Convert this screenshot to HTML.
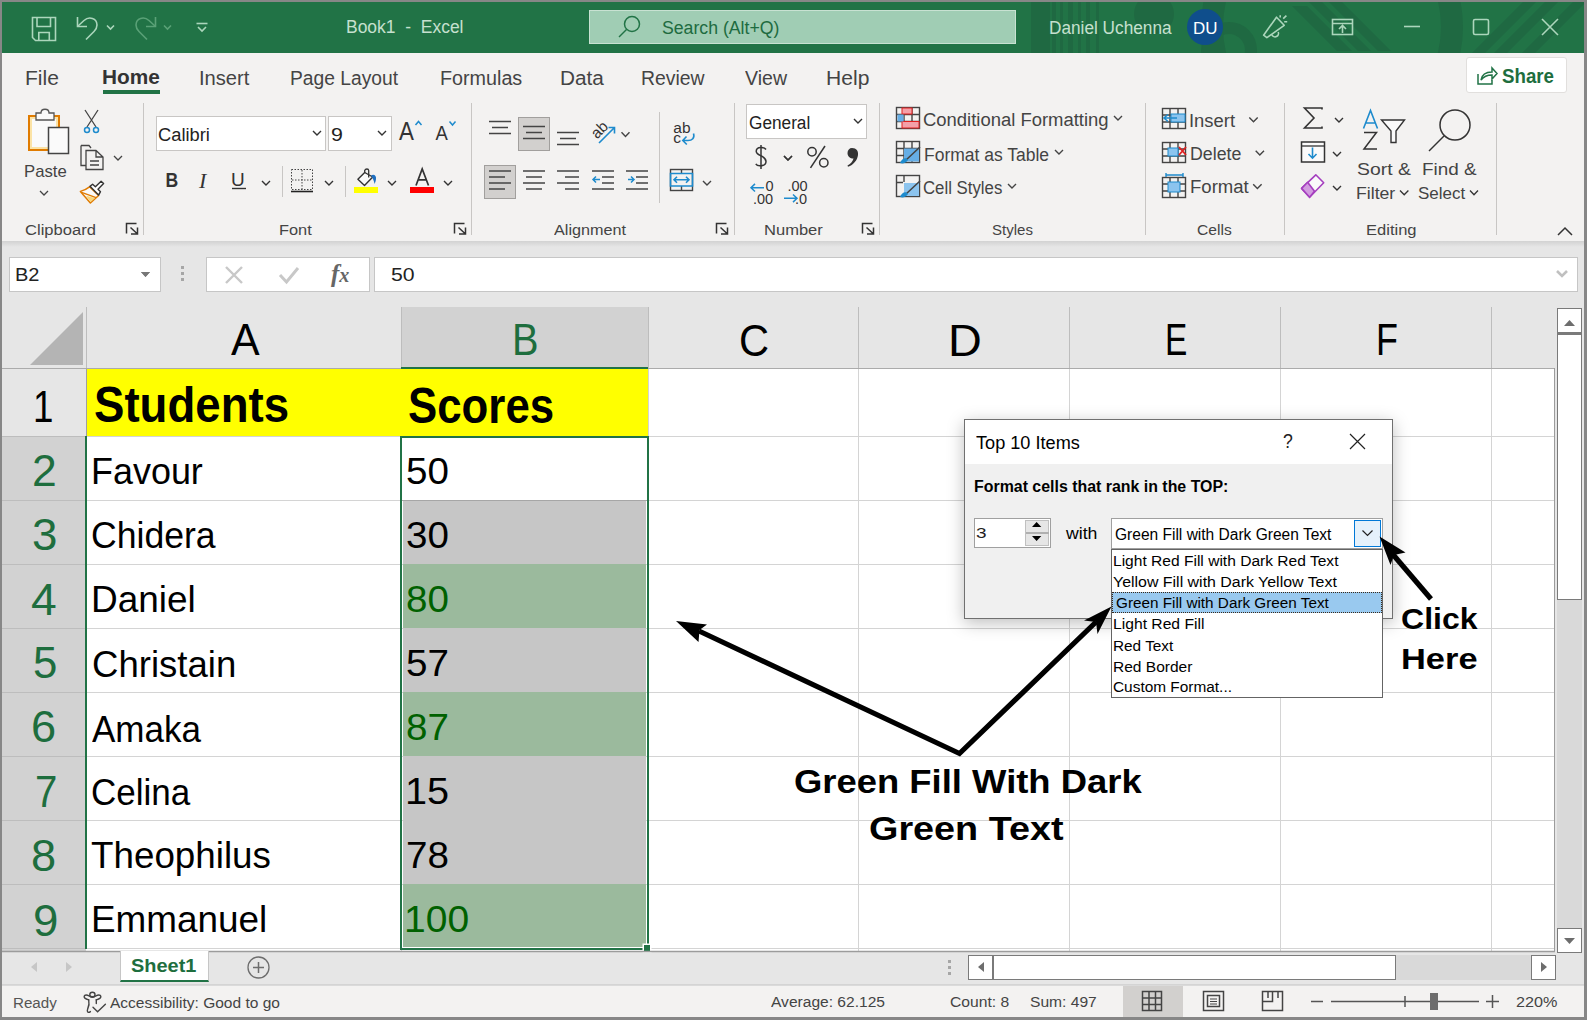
<!DOCTYPE html>
<html><head><meta charset="utf-8">
<style>
*{margin:0;padding:0;box-sizing:border-box}
html,body{width:1587px;height:1020px;overflow:hidden;background:#878787}
body{position:relative;font-family:"Liberation Sans",sans-serif;color:#262626}
.a{position:absolute}
svg{position:absolute;overflow:visible}
.t{position:absolute;white-space:nowrap;line-height:1}
#title{left:2px;top:2px;width:1582px;height:51px;background:#217346;overflow:hidden}
#tabs{left:2px;top:53px;width:1582px;height:47px;background:#f3f2f1}
#ribbon{left:2px;top:100px;width:1582px;height:141px;background:#f3f2f1}
#fbar{left:2px;top:241px;width:1582px;height:67px;background:#e6e6e6}
#grid{left:2px;top:307px;width:1553px;height:645px;background:#fff}
#tabbar{left:2px;top:952px;width:1582px;height:33px;background:#e6e6e6}
#status{left:2px;top:985px;width:1582px;height:32px;background:#f3f2f1;border-top:1px solid #dadada}
</style></head><body>
<div id="title" class="a"></div>
<div id="tabs" class="a"></div>
<div id="ribbon" class="a"></div>
<div id="fbar" class="a"></div>
<div id="grid" class="a"></div>
<div id="tabbar" class="a"></div>
<div id="status" class="a"></div>
<!-- TITLE BAR -->
<div class="a" style="left:2px;top:2px;width:1582px;height:51px;overflow:hidden">
<svg style="left:-2px;top:-2px" width="1587" height="60">
 <g fill="#1f6942">
  <rect x="1031" y="0" width="19" height="60"/>
  <rect x="1052" y="0" width="4" height="60"/><rect x="1060" y="0" width="3" height="60"/><rect x="1068" y="0" width="5" height="60"/><rect x="1078" y="0" width="3" height="60"/><rect x="1086" y="0" width="4" height="60"/><rect x="1096" y="0" width="3" height="60"/>
  <circle cx="1154" cy="14" r="20"/>
  <circle cx="1229" cy="50" r="22" fill="none" stroke="#1f6942" stroke-width="12"/>
  <path d="M1292 6 L1307 6 L1352 51 L1337 51Z"/><path d="M1307 0 L1320 0 L1371 51 L1358 51Z"/><path d="M1327 0 L1340 0 L1391 51 L1378 51Z"/>
  <circle cx="1332" cy="27" r="120" fill="none" stroke="#1f6942" stroke-width="22"/>
  <path d="M1472 53 L1485 53 L1536 2 L1523 2Z"/><path d="M1494 53 L1507 53 L1558 2 L1545 2Z"/><path d="M1522 53 L1535 53 L1586 2 L1573 2Z"/>
 </g>
 <g fill="none" stroke="#acd6bc" stroke-width="1.6">
  <path d="M32.5 17.5 H55.5 V40.5 H35.5 L32.5 37.5 Z"/>
  <path d="M37 17.5 V26.5 H50.5 V17.5"/>
  <path d="M38.8 40.5 V32.5 H49.3 V40.5"/>
  <path d="M77.5 17 V26.5 H87"/>
  <path d="M78 26 L84 20.5 C89 16 97 18 97 25 C97 28 96 29.5 94 31.5 L86 39.5"/>
  <path d="M107 25.5 L110.5 29 L114 25.5"/>
  <path d="M196.5 23.5 H207.5" />
  <path d="M198 27 L202 31 L206 27"/>
 </g>
 <g fill="none" stroke="#5aa177" stroke-width="1.6">
  <path d="M155.5 17 V26.5 H146"/>
  <path d="M155 26 L149 20.5 C144 16 136 18 136 25 C136 28 137 29.5 139 31.5 L147 39.5"/>
  <path d="M164 25.5 L167.5 29 L171 25.5"/>
 </g>
 <rect x="589.5" y="10.5" width="426" height="33" fill="#a0cdb4" stroke="#c8e2d2"/>
 <g fill="none" stroke="#217346" stroke-width="1.5"><circle cx="632" cy="24" r="7.5"/><path d="M626.5 29.5 L619 37"/></g>
 <circle cx="1205" cy="27" r="18" fill="#0f4e8c"/>
 <g fill="none" stroke="#acd6bc" stroke-width="1.6">
  <path d="M1276.5 17.2 L1284.2 25.3 L1266.9 37.6 L1263.6 35.2 Z" stroke-linejoin="round"/>
  <path d="M1271.9 34.8 A3 3 0 0 0 1278.2 32"/>
  <path d="M1280.2 15.2 V17.6 M1283.2 18.6 L1286.4 15.6 M1284.2 21.8 H1287.2" stroke-width="1.6"/>
  <rect x="1332.5" y="19.5" width="20" height="15"/>
  <path d="M1332.5 23.5 H1352.5 M1342.5 33 V26 M1339 29 L1342.5 25.5 L1346 29"/>
  <path d="M1404 26.5 H1420"/>
  <rect x="1473.5" y="19.5" width="15" height="15" rx="1.5"/>
  <path d="M1542 19 L1558 35 M1558 19 L1542 35"/>
 </g>
</svg></div>
<!-- TABS -->

<div class="a" style="left:103px;top:90px;width:57px;height:4px;background:#217346"></div>
<div class="a" style="left:1466px;top:57px;width:101px;height:36px;background:#fff;border:1px solid #e1dfdd;border-radius:3px"></div>
<svg style="left:1476px;top:65px" width="22" height="22"><g fill="none" stroke="#217346" stroke-width="1.5"><path d="M2 9 V19 H16 V15"/><path d="M5 15 C6 9 10 7 16 7 V3 L21 8.5 L16 14 V10 C11 10 8 11 5 15Z"/></g></svg>
<!-- RIBBON -->
<svg style="left:0;top:0" width="1587" height="245">
<g stroke="#c8c6c4" stroke-width="1">
 <path d="M143.5 103 V235 M471.5 103 V235 M734.5 103 V235 M879.5 103 V235 M1145.5 103 V235 M1284.5 103 V235 M1496.5 103 V235"/>
 <path d="M282.5 166 V197 M345.5 166 V197 M659.5 112 V203"/>
</g>
<!-- Paste -->
<path d="M29 116 H59 V150 H29 Z" fill="#fbe3a6" stroke="#e07b00" stroke-width="2"/>
<path d="M32 119 H56 V147 H32 Z" fill="#fafafa"/>
<path d="M36 120 V113 H41 C41 108 49 108 49 113 H54 V120 Z" fill="#fafafa" stroke="#555" stroke-width="1.3"/>
<rect x="48.5" y="127.5" width="20" height="26" fill="#fafafa" stroke="#444" stroke-width="1.5"/>
<g fill="none" stroke="#444" stroke-width="1.3">
 <path d="M40 191 L44 195 L48 191"/>
 <path d="M114 156 L118 160 L122 156"/>
 <path d="M85 110 L96 127 M98 110 L87 127"/>
 <path d="M81 145.5 H89 L91 148 M81 145.5 V165.5 H86"/>
 <path d="M86 150.5 H96 L103 157 V169.5 H86 Z M96 150.5 V157 H103 M90 161 H99 M90 165 H99"/>
 
</g>
<g fill="none" stroke="#1e8bcd" stroke-width="1.5"><circle cx="87" cy="130" r="2.5"/><circle cx="96" cy="130" r="2.5"/></g>
<path d="M89.5 186.8 C86 189.5 83 190.7 80.4 191.4 L90.4 203 L98.6 195.5 Z" fill="#fafafa" stroke="#e07b00" stroke-width="1.5" stroke-linejoin="round"/>
<path d="M86 195.8 L95 198 L90.5 202 Z" fill="#f7d67a"/>
<path d="M81.6 192.3 L96.1 197.6" stroke="#e07b00" stroke-width="1.3"/>
<path d="M89.96 186.35 L92.6 184.3 L95.4 186.8 L101.1 181.3 L103.6 183.5 L98 189.2 L100.5 191.7 L98.6 195.1 Z" fill="#fff" stroke="#333" stroke-width="1.4" stroke-linejoin="round"/>
<!-- launchers -->
<g fill="none" stroke="#333" stroke-width="1.5">
 <path d="M126.5 233.5 V223.5 H136.5 M130.5 227.5 L137.0 233.5 M137.5 227.5 V234 H131.0 M454.5 233.5 V223.5 H464.5 M458.5 227.5 L465.0 233.5 M465.5 227.5 V234 H459.0 M716.5 233.5 V223.5 H726.5 M720.5 227.5 L727.0 233.5 M727.5 227.5 V234 H721.0 M862.5 233.5 V223.5 H872.5 M866.5 227.5 L873.0 233.5 M873.5 227.5 V234 H867.0"/>
</g>
<!-- Font group -->
<rect x="156.5" y="116.5" width="169" height="34" fill="#fff" stroke="#c8c6c4"/>
<rect x="328.5" y="116.5" width="63" height="34" fill="#fff" stroke="#c8c6c4"/>
<g fill="none" stroke="#333" stroke-width="1.4">
 <path d="M313 131 L317 135 L321 131 M378 131 L382 135 L386 131"/>
 <path d="M262 181 L266 185 L270 181 M325 181 L329 185 L333 181 M388 181 L392 185 L396 181 M444 181 L448 185 L452 181"/>
 
 
 <path d="M232 188.5 H246"/>
</g>
<path d="M415.5 125 L418.5 121.5 L421.5 125" fill="none" stroke="#1e8bcd" stroke-width="1.5"/>
<path d="M449.5 121.5 L452.5 125 L455.5 121.5" fill="none" stroke="#1e8bcd" stroke-width="1.5"/>
<text x="165.5" y="187" font-family="Liberation Sans" font-weight="bold" font-size="20" fill="#333" transform="translate(165.5 0) scale(0.88 1) translate(-165.5 0)">B</text>
<text x="399" y="139.6" font-family="Liberation Sans" font-size="26" fill="#333" transform="translate(399 0) scale(0.86 1) translate(-399 0)">A</text>
<text x="435.5" y="139.6" font-family="Liberation Sans" font-size="20.5" fill="#333" transform="translate(435.5 0) scale(0.9 1) translate(-435.5 0)">A</text>
<text x="199" y="188" font-family="Liberation Serif" font-style="italic" font-size="22" fill="#333">I</text>
<text x="231" y="186" font-family="Liberation Sans" font-size="19" fill="#333">U</text>
<g fill="none" stroke="#444" stroke-width="1" stroke-dasharray="1.5 1.5">
 <rect x="291.5" y="169.5" width="21" height="20"/><path d="M302 170 V190 M292 180 H312"/>
</g>
<path d="M291 191.5 H313" stroke="#222" stroke-width="1.6"/>
<!-- fill -->
<path d="M357.9 179.3 L364.7 172.5 L372.7 177 L364.5 185.5 Z" fill="#fafafa" stroke="#333" stroke-width="1.4" stroke-linejoin="round"/>
<path d="M364.7 173 V170.5 C365.5 168.5 368.5 168.5 368.7 170.5 V177.6" fill="none" stroke="#333" stroke-width="1.3"/>
<path d="M371 175.5 C374 173.5 376.5 176 376 179 C375.8 181 375 183 374.6 184 C374 181 373 178.5 371 175.5 Z" fill="#1e6fc0"/>
<rect x="354" y="187" width="24" height="6" fill="#ffff00"/>
<path d="M416 185.5 L422.2 169 L428.5 185.5 M418.4 179.9 H426.3" fill="none" stroke="#333" stroke-width="1.7"/>
<rect x="410" y="187" width="24" height="6" fill="#ff0000"/>
<!-- Alignment group -->
<rect x="518.5" y="117.5" width="31" height="33" fill="#d2d0ce" stroke="#a19f9d"/>
<rect x="484.5" y="165.5" width="31" height="33" fill="#d2d0ce" stroke="#a19f9d"/>
<g fill="none" stroke="#444" stroke-width="1.4">
 <path d="M489 121.5 H511 M492 127.5 H508 M489 133.5 H511"/>
 <path d="M523 126.5 H545 M526 132.5 H542 M523 138.5 H545"/>
 <path d="M557 132.5 H579 M560 138.5 H576 M557 144.5 H579"/>
 <path d="M489 171 H511 M489 177 H505 M489 183 H511 M489 189 H505"/>
 <path d="M523 171 H545 M526 177 H542 M523 183 H545 M526 189 H542"/>
 <path d="M557 171 H579 M565 177 H579 M557 183 H579 M565 189 H579"/>
 <path d="M592 171 H614 M602 177 H614 M602 183 H614 M592 189 H614"/>
 <path d="M626 171 H648 M636 177 H648 M636 183 H648 M626 189 H648"/>
 <path d="M621.5 132.3 L625.5 136.5 L629.5 132.3 M703 181 L707 185 L711 181"/>
 <rect x="670.5" y="169.5" width="22" height="21"/><path d="M681.5 169.5 V173.5 M681.5 186 V190.5"/>
</g>
<g fill="none" stroke="#1e8bcd" stroke-width="1.5">
 <path d="M593 179.5 H600 M596 176.5 L593 179.5 L596 182.5"/>
 <path d="M628 179.5 H634 M631 176.5 L634 179.5 L631 182.5"/>
 <path d="M599 143 L614.5 127.5 M608.5 127.5 H614.5 V133.5" stroke-width="1.6"/>
 <path d="M670.5 173.5 H692.5 V186 H670.5 Z" stroke-width="1.6"/>
 <path d="M674 179.8 H689 M677 176.8 L674 179.8 L677 182.8 M686 176.8 L689 179.8 L686 182.8" stroke-width="1.6"/>
 <path d="M693.5 133.5 C695 138 692 140.5 688 140.5 H683 M686.5 136.5 L682.8 140.5 L686.8 144.5" stroke-width="1.6"/>
</g>
<text x="590" y="135" transform="rotate(-45 599 129)" font-family="Liberation Sans" font-size="15.5" fill="#333">ab</text>
<text x="673.3" y="132.8" font-family="Liberation Sans" font-size="15.5" fill="#333">ab</text>
<text x="673.3" y="143.4" font-family="Liberation Sans" font-size="15.5" fill="#333">c</text>
<!-- Number group -->
<rect x="746.5" y="104.5" width="120" height="34" fill="#fff" stroke="#c8c6c4"/>
<path d="M854 119 L858 123 L862 119 M784 156 L788 160 L792 156" fill="none" stroke="#333" stroke-width="1.4"/>
<g fill="none" stroke="#333" stroke-width="1.5">
 <path d="M761 145 V169"/>
 <path d="M766 149.5 C764.5 147 756.5 146 756.2 151.2 C756 156.2 766 155.2 766 161.5 C766 166.5 757.5 167 755.8 163.8"/>
 <circle cx="812" cy="151.8" r="4.2"/><circle cx="823.8" cy="162.8" r="4.2"/>
 <path d="M810.5 167.8 L825 146"/>
 <path d="M784 156 L788 160 L792 156" stroke-width="1.4"/>
</g>
<path d="M852 148 C856.5 148 858.5 151 858 155 C857.5 160 853.5 165 848 166.8 L847.5 165.5 C851 163.5 853 161 853.5 158.5 C850 158.5 847.5 156.5 847.5 153 C847.5 150 849.5 148 852 148 Z" fill="#333"/>
<g font-family="Liberation Sans" font-size="14.5" fill="#333">
 <text x="765.5" y="191.2">0</text>
 <text x="753" y="203.6">.00</text>
 <text x="787.5" y="191.2">.00</text>
 <text x="795" y="203.6">.0</text>
</g>
<path d="M751 187.7 H764 M755 183.9 L751 187.7 L755 191.5 M784 198.3 H797 M793 194.5 L797 198.3 L793 202.1" fill="none" stroke="#1e8bcd" stroke-width="1.5"/>
<!-- Styles icons -->
<g fill="none" stroke="#444" stroke-width="1.4">
 <rect x="896.5" y="107.5" width="23" height="21"/>
 <path d="M896.5 114.5 H919.5 M896.5 121.5 H919.5 M904 107.5 V128.5 M912 107.5 V128.5"/>
 <rect x="896.5" y="141.5" width="23" height="21"/>
 <path d="M896.5 148.5 H919.5 M896.5 155.5 H919.5 M904 141.5 V162.5 M912 141.5 V162.5"/>
 <rect x="896.5" y="175.5" width="23" height="21"/>
 <path d="M896.5 182.5 H903 M904 175.5 V182 "/>
</g>
<rect x="902" y="108" width="10" height="6" fill="#f3a0a8" stroke="#e02020" stroke-width="1"/>
<rect x="902" y="121.5" width="17" height="6.5" fill="#f3a0a8" stroke="#e02020" stroke-width="1"/>
<rect x="897.5" y="114.5" width="6" height="7" fill="#66aee6"/>
<rect x="904" y="148.5" width="15" height="13" fill="#66aee6"/>
<rect x="904" y="183" width="15" height="13" fill="#8cc4ee"/>
<g fill="none" stroke="#444" stroke-width="1.6">
 <path d="M920 147 L906 160 M920 181 L906 194"/>
</g>
<path d="M900 163 C902 158 906 157 908 160 C906 163 903 164 900 163Z M900 197 C902 192 906 191 908 194 C906 197 903 198 900 197Z" fill="#1e8bcd"/>
<g fill="none" stroke="#444" stroke-width="1.4">
 <path d="M1114 116 L1118 120 L1122 116 M1055 150 L1059 154 L1063 150 M1008 184 L1012 188 L1016 184"/>
</g>
<!-- Cells icons -->
<g fill="none" stroke="#444" stroke-width="1.4">
 <rect x="1162.5" y="108.5" width="23" height="20"/><path d="M1162.5 115 H1185.5 M1162.5 122 H1185.5 M1170 108.5 V128.5 M1178 108.5 V128.5"/>
 <rect x="1162.5" y="142.5" width="23" height="20"/><path d="M1162.5 149 H1185.5 M1162.5 156 H1185.5 M1170 142.5 V162.5 M1178 142.5 V162.5"/>
 <rect x="1162.5" y="177.5" width="23" height="20"/><path d="M1162.5 184 H1185.5 M1162.5 191 H1185.5 M1170 177.5 V197.5 M1178 177.5 V197.5"/>
 <path d="M1249.3 117.5 L1253.5 121.8 L1257.7 117.5 M1255.7 150.7 L1259.8 155 L1264 150.7 M1253.2 184.2 L1257.4 188.5 L1261.6 184.2"/>
</g>
<rect x="1171" y="114" width="14" height="8" fill="#8cc4ee" stroke="#1e8bcd"/>
<path d="M1177 118 H1164 M1168 114.5 L1164 118 L1168 121.5" fill="none" stroke="#1e8bcd" stroke-width="1.6"/>
<rect x="1168" y="148" width="10" height="8" fill="#8cc4ee" stroke="#1e8bcd"/>
<path d="M1179 147 L1186 155 M1186 147 L1179 155" stroke="#e02020" stroke-width="1.8"/>
<rect x="1168" y="182" width="12" height="10" fill="#8cc4ee" stroke="#1e8bcd"/>
<path d="M1166 175 H1183 M1166 173 V177 M1183 173 V177" stroke="#1e8bcd" stroke-width="1.4" fill="none"/>
<!-- Editing icons -->
<g fill="none" stroke="#333" stroke-width="1.6">
 <path d="M1322 109.5 V108 H1304.5 L1314 118 L1304.5 128 H1322 V126.5"/>
 <rect x="1301.5" y="142" width="23" height="20" stroke-width="1.5" fill="#fafafa"/><path d="M1301.5 146 H1324.5" stroke-width="1.3"/>
 <path d="M1335 118 L1339 122 L1343 118 M1333 152 L1337 156 L1341 152 M1333 186 L1337 190 L1341 186" stroke-width="1.4"/>
 <path d="M1364 132.5 H1376.5 L1364 149 H1377" stroke-width="1.5"/>
 <path d="M1381.5 120 H1404.5 L1396 131 V142.5 H1391 V131 Z" stroke-width="1.4" fill="#fafafa"/>
 <circle cx="1455" cy="125" r="15" stroke-width="1.5"/><path d="M1444 136 L1429 151" stroke-width="1.5"/>
 <path d="M1558 235 L1565 228 L1572 235" stroke-width="1.5"/>
</g>
<path d="M1312.5 147.5 V158 M1308.5 154 L1312.5 158.2 L1316.5 154" fill="none" stroke="#1e8bcd" stroke-width="1.6"/>
<path d="M1363.5 128.5 L1370.5 110.5 L1377.5 128.5 M1366 123 H1375" fill="none" stroke="#1e8bcd" stroke-width="1.6"/>
<path d="M1301.6 188.4 L1315.8 174.8 L1323.7 182.7 L1309.6 197.3 Z" fill="#fafafa" stroke="#a53fbf" stroke-width="1.6" stroke-linejoin="round"/>
<path d="M1301.6 188.4 L1307.6 182.3 L1314.5 191.3 L1309.6 197.3 Z" fill="#d29be0" stroke="#a53fbf" stroke-width="1.6" stroke-linejoin="round"/>
<path d="M1400 190.5 L1404.2 194.8 L1408.4 190.5 M1470 190.5 L1474 194.8 L1478 190.5" fill="none" stroke="#333" stroke-width="1.3"/>
</svg>
<!-- FORMULA BAR -->
<div class="a" style="left:2px;top:241px;width:1582px;height:6px;background:linear-gradient(#d2d2d2,#e6e6e6)"></div>
<div class="a" style="left:9px;top:257px;width:152px;height:35px;background:#fff;border:1px solid #c6c6c6"></div>
<svg style="left:0;top:0" width="1587" height="310">
 <path d="M141 272 H150 L145.5 277 Z" fill="#777"/>
 <g fill="#a6a6a6"><rect x="181" y="266" width="3" height="3"/><rect x="181" y="272" width="3" height="3"/><rect x="181" y="278" width="3" height="3"/></g>
 <path d="M226 267 L242 283 M242 267 L226 283" stroke="#c6c6c6" stroke-width="2"/>
 <path d="M280 275 L286 282 L298 268" fill="none" stroke="#c6c6c6" stroke-width="2.5"/>
 <path d="M1557 271 L1562 276 L1567 271" fill="none" stroke="#c6c6c6" stroke-width="2"/>
 
</svg>
<div class="a" style="left:206px;top:257px;width:164px;height:35px;background:#fff;border:1px solid #c6c6c6"></div>
<div class="a" style="left:374px;top:257px;width:1204px;height:35px;background:#fff;border:1px solid #c6c6c6"></div>
<svg style="left:0;top:0" width="1587" height="310">
 <path d="M226 267 L242 283 M242 267 L226 283" stroke="#c8c8c8" stroke-width="2.4"/>
 <path d="M280 275 L286.5 282 L298 268" fill="none" stroke="#c8c8c8" stroke-width="3"/>
 <path d="M1557 271 L1562 276 L1567 271" fill="none" stroke="#c0c0c0" stroke-width="2.6"/>
</svg>
<div class="a" style="white-space:nowrap;line-height:1;left:331px;top:261px;font-size:25px;color:#666;font-family:'Liberation Serif',serif;font-style:italic;font-weight:bold">f<span style="font-size:20px">x</span></div>
<div class="a" style="left:9px;top:257px;width:152px;height:35px"><svg style="left:131px;top:14px" width="12" height="8"><path d="M1 1 H10 L5.5 6 Z" fill="#777"/></svg></div>
<!-- GRID -->
<div class="a" style="left:2px;top:307px;width:1553px;height:61px;background:#e6e6e6"></div>
<div class="a" style="left:401px;top:307px;width:247px;height:61px;background:#d2d2d2"></div>
<div class="a" style="left:2px;top:368px;width:84px;height:68px;background:#e6e6e6"></div>
<div class="a" style="left:2px;top:436px;width:84px;height:516px;background:#d2d2d2"></div>
<svg style="left:0;top:0" width="1587" height="1020">
<path d="M30 365 L83 312 V365 Z" fill="#b4b4b4"/>
<rect x="87" y="369" width="561" height="67" fill="#ffff00"/>
<path d="M87 436.5 H1555 M87 500.5 H1555 M87 564.5 H1555 M87 628.5 H1555 M87 692.5 H1555 M87 756.5 H1555 M87 820.5 H1555 M87 884.5 H1555 M87 948.5 H1555 M648.5 369 V952 M858.5 369 V952 M1069.5 369 V952 M1280.5 369 V952 M1491.5 369 V952 M401.5 436 V952" stroke="#d4d4d4" stroke-width="1"/>
<path d="M86.5 307 V368 M401.5 307 V368 M648.5 307 V368 M858.5 307 V368 M1069.5 307 V368 M1280.5 307 V368 M1491.5 307 V368" stroke="#bdbdbd" stroke-width="1"/>
<path d="M2 436.5 H86 M2 500.5 H86 M2 564.5 H86 M2 628.5 H86 M2 692.5 H86 M2 756.5 H86 M2 820.5 H86 M2 884.5 H86 M2 948.5 H86" stroke="#bdbdbd" stroke-width="1"/>
<path d="M86.5 368 V436" stroke="#a0a0a0"/>
<path d="M2 368.5 H1555" stroke="#ababab"/>
<rect x="401" y="367" width="247" height="2" fill="#217346"/>
<rect x="85" y="436" width="2" height="513" fill="#217346"/>
<rect x="403" y="501" width="243" height="63" fill="#c6c6c6"/>
<rect x="403" y="564" width="243" height="64" fill="#9bba9d"/>
<rect x="403" y="628" width="243" height="64" fill="#c6c6c6"/>
<rect x="403" y="692" width="243" height="64" fill="#9bba9d"/>
<rect x="403" y="756" width="243" height="64" fill="#c6c6c6"/>
<rect x="403" y="820" width="243" height="64" fill="#c6c6c6"/>
<rect x="403" y="884" width="243" height="63" fill="#9bba9d"/>
<path d="M402 500.5 H647" stroke="#a6a6a6"/>
<rect x="401" y="437" width="247" height="512" fill="none" stroke="#217346" stroke-width="2"/>
<rect x="642.5" y="943.5" width="9" height="9" fill="#fff"/><rect x="644" y="945" width="6" height="6" fill="#217346"/>
<path d="M2 951.5 H1555" stroke="#9c9c9c" stroke-width="1.5"/>
<path d="M1554.5 368 V952" stroke="#9c9c9c"/>
</svg>
<!-- SCROLLBARS, TABS, STATUS -->
<div class="a" style="left:1555px;top:307px;width:29px;height:645px;background:#e6e6e6"></div>
<div class="a" style="left:1557px;top:600px;width:25px;height:328px;background:#d9d9d9"></div>
<div class="a" style="left:1557px;top:308px;width:25px;height:25px;background:#fff;border:1px solid #7a7a7a"></div>
<div class="a" style="left:1557px;top:333px;width:25px;height:267px;background:#fff;border:1px solid #7a7a7a;border-top-width:2px"></div>
<div class="a" style="left:1557px;top:928px;width:25px;height:25px;background:#fff;border:1px solid #7a7a7a"></div>
<div class="a" style="left:968px;top:955px;width:588px;height:25px;background:#d9d9d9"></div>
<div class="a" style="left:968px;top:955px;width:26px;height:25px;background:#fff;border:1px solid #7a7a7a"></div>
<div class="a" style="left:992px;top:955px;width:404px;height:25px;background:#fff;border:1px solid #7a7a7a;border-left-width:2px"></div>
<div class="a" style="left:1531px;top:955px;width:25px;height:25px;background:#fff;border:1px solid #7a7a7a"></div>
<div class="a" style="left:2px;top:984px;width:1582px;height:1px;background:#d4d4d4"></div>
<div class="a" style="left:120px;top:951px;width:89px;height:31px;background:#fff;border:1px solid #c6c6c6;border-top:none;border-bottom:2px solid #217346"></div>
<svg style="left:0;top:0" width="1587" height="1020">
 <path d="M1564 326 L1569.5 320 L1575 326 Z" fill="#6d6d6d"/>
 <path d="M1564 938 H1575 L1569.5 944 Z" fill="#6d6d6d"/>
 <path d="M984 962 V972 L978 967 Z" fill="#6d6d6d"/>
 <path d="M1541 962 V972 L1547 967 Z" fill="#6d6d6d"/>
 <g fill="#a6a6a6"><rect x="948" y="960" width="3" height="3"/><rect x="948" y="966" width="3" height="3"/><rect x="948" y="972" width="3" height="3"/></g>
 <path d="M37 962 V972 L31 967 Z" fill="#c6c6c6"/>
 <path d="M66 962 V972 L72 967 Z" fill="#c6c6c6"/>
 <circle cx="258.5" cy="967.5" r="10.5" fill="none" stroke="#6d6d6d" stroke-width="1.3"/>
 <path d="M253 967.5 H264 M258.5 962 V973" stroke="#6d6d6d" stroke-width="1.5"/>
 <!-- accessibility -->
 <g fill="none" stroke="#444" stroke-width="1.4" stroke-linecap="round">
  <circle cx="92.4" cy="994.8" r="2.6"/>
  <path d="M88.7 999.8 C86 999 83.8 998 84.2 996.3 C84.7 994.6 87 994.8 89 995.8 C91 996.8 94 996.8 96 995.8 C98 994.8 100.3 994.6 100.8 996.3 C101.2 998 99 999 96.3 999.8"/>
  <path d="M88.7 999.8 C89.6 1003.5 88.8 1006.5 87.6 1009.3 C86.5 1012 88.5 1013.2 90.4 1011.6"/>
  <path d="M96.3 999.8 V1003.6"/>
  <path d="M93 1007.2 L97.6 1011.8 L105.4 1004.2"/>
 </g>
 <!-- status view buttons -->
 <rect x="1123" y="986" width="60" height="31" fill="#d2d0ce"/>
 <g fill="none" stroke="#444" stroke-width="1.5">
  <rect x="1142.5" y="991.5" width="19" height="19"/><path d="M1142.5 998 H1161.5 M1142.5 1004.5 H1161.5 M1149 991.5 V1010.5 M1155.5 991.5 V1010.5"/>
  <rect x="1203.5" y="991.5" width="20" height="19"/><rect x="1207.5" y="995.5" width="12" height="11"/><path d="M1210 999 H1217 M1210 1001.5 H1217 M1210 1004 H1217" stroke-width="1"/>
  <rect x="1262.5" y="991.5" width="20" height="19"/><path d="M1262.5 1001.5 H1272.5 V991.5 M1268 991.5 V998 M1278 991.5 V998" />
  <path d="M1311 1001.5 H1323 M1486 1001.5 H1499 M1492.5 995 V1008" stroke="#555"/>
 </g>
 <path d="M1331 1001.5 H1479" stroke="#555" stroke-width="1.5"/>
 <path d="M1405 996 V1007" stroke="#555" stroke-width="1.5"/>
 <rect x="1430" y="993" width="8" height="17" fill="#6d6d6d"/>
</svg>
<!-- DIALOG -->
<div class="a" style="left:964px;top:419px;width:429px;height:200px;background:#f0f0f0;border:1px solid #707070;box-shadow:0 4px 16px rgba(0,0,0,0.26)"></div>
<div class="a" style="left:965px;top:420px;width:427px;height:44px;background:#fff"></div>
<svg style="left:0;top:0" width="1587" height="1020">
 <path d="M1350 434 L1365 449 M1365 434 L1350 449" stroke="#222" stroke-width="1.2"/>
</svg>
<div class="a" style="left:974px;top:518px;width:77px;height:30px;background:#fff;border:1px solid #a0a0a0"></div>
<div class="a" style="left:1025px;top:520px;width:24px;height:26px;background:#e6e6e6;border:1px solid #c0c0c0"></div>
<svg style="left:0;top:0" width="1587" height="1020">
 <path d="M1032 527 L1036.6 522 L1041.3 527 Z M1032 536 H1041.3 L1036.6 541 Z" fill="#000"/>
 <path d="M1026 533 H1049" stroke="#b0b0b0" stroke-width="2"/>
</svg>
<div class="a" style="left:1111px;top:518px;width:272px;height:31px;background:#fff;border:1px solid #a0a0a0"></div>
<div class="a" style="left:1354px;top:520px;width:27px;height:27px;background:#e5f1fb;border:1px solid #0078d7"></div>
<svg style="left:0;top:0" width="1587" height="1020">
 <path d="M1362.5 530.5 L1367.5 535.5 L1372.5 530.5" fill="none" stroke="#222" stroke-width="1.2"/>
</svg>
<!-- LIST -->
<div class="a" style="left:1111px;top:549px;width:272px;height:149px;background:#fff;border:1px solid #646464"></div>
<div class="a" style="left:1112px;top:592px;width:270px;height:21px;background:#99c9ef;border:1px dotted #3b2a1a"></div>
<!-- ARROWS -->
<svg style="left:0;top:0" width="1587" height="1020">
 <g stroke="#000" stroke-width="5.2" fill="none" stroke-linejoin="miter">
  <path d="M699 631 L959.5 753.5 L1096 622"/>
  <path d="M1431 599 L1390 551"/>
 </g>
 <path d="M676 621 L707 624.5 L699.5 630 L698.5 642 Z" fill="#000"/>
 <path d="M1111.5 606.5 L1097.5 634 L1096 622 L1084 620.5 Z" fill="#000"/>
 <path d="M1379.5 536.5 L1405.5 552.5 L1394 555 L1390.5 565 Z" fill="#000"/>
</svg>
<!-- TEXT -->
<div class="t" style="left:346.10px;top:17.89px;font-size:18.00px;color:#c6e0cf;transform:scaleX(0.9707);transform-origin:0 0;">Book1&nbsp; -&nbsp; Excel</div>
<div class="t" style="left:662.10px;top:18.89px;font-size:18.00px;color:#1e6b40;transform:scaleX(0.9821);transform-origin:0 0;">Search (Alt+Q)</div>
<div class="t" style="left:1049.10px;top:18.88px;font-size:18.00px;color:#c6e0cf;transform:scaleX(0.9568);transform-origin:0 0;">Daniel Uchenna</div>
<div class="t" style="left:1193.20px;top:21.12px;font-size:16.00px;color:#ffffff;transform:scaleX(1.0590);transform-origin:0 0;">DU</div>
<div class="t" style="left:25.00px;top:67.65px;font-size:20.00px;color:#444444;transform:scaleX(1.0517);transform-origin:0 0;">File</div>
<div class="t" style="left:102.00px;top:66.65px;font-size:20.00px;font-weight:bold;color:#333333;transform:scaleX(1.0401);transform-origin:0 0;">Home</div>
<div class="t" style="left:199.00px;top:67.65px;font-size:20.00px;color:#444444;transform:scaleX(1.0068);transform-origin:0 0;">Insert</div>
<div class="t" style="left:290.00px;top:67.65px;font-size:20.00px;color:#444444;transform:scaleX(0.9623);transform-origin:0 0;">Page Layout</div>
<div class="t" style="left:440.00px;top:67.65px;font-size:20.00px;color:#444444;transform:scaleX(0.9865);transform-origin:0 0;">Formulas</div>
<div class="t" style="left:560.00px;top:67.65px;font-size:20.00px;color:#444444;transform:scaleX(1.0381);transform-origin:0 0;">Data</div>
<div class="t" style="left:641.00px;top:67.65px;font-size:20.00px;color:#444444;transform:scaleX(0.9690);transform-origin:0 0;">Review</div>
<div class="t" style="left:745.00px;top:67.65px;font-size:20.00px;color:#444444;transform:scaleX(0.9767);transform-origin:0 0;">View</div>
<div class="t" style="left:826.00px;top:67.65px;font-size:20.00px;color:#444444;transform:scaleX(1.0539);transform-origin:0 0;">Help</div>
<div class="t" style="left:1502.00px;top:65.65px;font-size:20.00px;font-weight:bold;color:#1e6e3e;transform:scaleX(0.9356);transform-origin:0 0;">Share</div>
<div class="t" style="left:24.15px;top:163.00px;font-size:17.00px;color:#444444;transform:scaleX(0.9834);transform-origin:0 0;">Paste</div>
<div class="t" style="left:25.23px;top:222.18px;font-size:15.50px;color:#444444;transform:scaleX(1.0680);transform-origin:0 0;">Clipboard</div>
<div class="t" style="left:279.23px;top:222.18px;font-size:15.50px;color:#444444;transform:scaleX(1.0566);transform-origin:0 0;">Font</div>
<div class="t" style="left:554.23px;top:222.18px;font-size:15.50px;color:#444444;transform:scaleX(1.0450);transform-origin:0 0;">Alignment</div>
<div class="t" style="left:764.23px;top:222.18px;font-size:15.50px;color:#444444;transform:scaleX(1.0670);transform-origin:0 0;">Number</div>
<div class="t" style="left:992.22px;top:222.18px;font-size:15.50px;color:#444444;transform:scaleX(0.9688);transform-origin:0 0;">Styles</div>
<div class="t" style="left:1197.22px;top:222.18px;font-size:15.50px;color:#444444;transform:scaleX(1.0069);transform-origin:0 0;">Cells</div>
<div class="t" style="left:1366.22px;top:222.18px;font-size:15.50px;color:#444444;transform:scaleX(1.0667);transform-origin:0 0;">Editing</div>
<div class="t" style="left:158.10px;top:125.88px;font-size:18.00px;color:#222222;transform:scaleX(1.0166);transform-origin:0 0;">Calibri</div>
<div class="t" style="left:331.10px;top:125.88px;font-size:18.00px;color:#222222;transform:scaleX(1.1875);transform-origin:0 0;">9</div>
<div class="t" style="left:749.10px;top:113.89px;font-size:18.00px;color:#222222;transform:scaleX(0.9568);transform-origin:0 0;">General</div>
<div class="t" style="left:923.10px;top:110.89px;font-size:18.00px;color:#444444;transform:scaleX(1.0250);transform-origin:0 0;">Conditional Formatting</div>
<div class="t" style="left:924.10px;top:145.88px;font-size:18.00px;color:#444444;transform:scaleX(0.9717);transform-origin:0 0;">Format as Table</div>
<div class="t" style="left:923.10px;top:178.88px;font-size:18.00px;color:#444444;transform:scaleX(0.9324);transform-origin:0 0;">Cell Styles</div>
<div class="t" style="left:1189.10px;top:111.89px;font-size:18.00px;color:#444444;transform:scaleX(1.0217);transform-origin:0 0;">Insert</div>
<div class="t" style="left:1190.10px;top:144.88px;font-size:18.00px;color:#444444;transform:scaleX(0.9863);transform-origin:0 0;">Delete</div>
<div class="t" style="left:1190.10px;top:177.89px;font-size:18.00px;color:#444444;transform:scaleX(1.0306);transform-origin:0 0;">Format</div>
<div class="t" style="left:1357.15px;top:161.00px;font-size:17.00px;color:#444444;transform:scaleX(1.1395);transform-origin:0 0;">Sort &amp;</div>
<div class="t" style="left:1356.15px;top:185.00px;font-size:17.00px;color:#444444;transform:scaleX(1.0388);transform-origin:0 0;">Filter</div>
<div class="t" style="left:1422.15px;top:161.00px;font-size:17.00px;color:#444444;transform:scaleX(1.1109);transform-origin:0 0;">Find &amp;</div>
<div class="t" style="left:1418.15px;top:185.00px;font-size:17.00px;color:#444444;transform:scaleX(0.9980);transform-origin:0 0;">Select</div>
<div class="t" style="left:15.10px;top:265.89px;font-size:18.00px;color:#222222;transform:scaleX(1.1120);transform-origin:0 0;">B2</div>
<div class="t" style="left:391.10px;top:265.88px;font-size:18.00px;color:#222222;transform:scaleX(1.1794);transform-origin:0 0;">50</div>
<div class="t" style="left:230.75px;top:316.71px;font-size:45.00px;color:#000000;transform:scaleX(0.9545);transform-origin:0 0;">A</div>
<div class="t" style="left:511.75px;top:316.71px;font-size:45.00px;color:#1e6e3e;transform:scaleX(0.8845);transform-origin:0 0;">B</div>
<div class="t" style="left:738.75px;top:317.71px;font-size:45.00px;color:#000000;transform:scaleX(0.9256);transform-origin:0 0;">C</div>
<div class="t" style="left:947.75px;top:317.71px;font-size:45.00px;color:#000000;transform:scaleX(1.0397);transform-origin:0 0;">D</div>
<div class="t" style="left:1164.75px;top:316.71px;font-size:45.00px;color:#000000;transform:scaleX(0.7435);transform-origin:0 0;">E</div>
<div class="t" style="left:1375.75px;top:316.71px;font-size:45.00px;color:#000000;transform:scaleX(0.7981);transform-origin:0 0;">F</div>
<div class="t" style="left:32.80px;top:384.83px;font-size:44.00px;color:#000000;transform:scaleX(0.8338);transform-origin:0 0;">1</div>
<div class="t" style="left:31.80px;top:448.83px;font-size:44.00px;color:#1e6e3e;transform:scaleX(1.0115);transform-origin:0 0;">2</div>
<div class="t" style="left:31.80px;top:512.83px;font-size:44.00px;color:#1e6e3e;transform:scaleX(1.0396);transform-origin:0 0;">3</div>
<div class="t" style="left:30.80px;top:577.83px;font-size:44.00px;color:#1e6e3e;transform:scaleX(1.0507);transform-origin:0 0;">4</div>
<div class="t" style="left:32.80px;top:640.83px;font-size:44.00px;color:#1e6e3e;transform:scaleX(0.9961);transform-origin:0 0;">5</div>
<div class="t" style="left:31.30px;top:705.33px;font-size:44.00px;color:#1e6e3e;transform:scaleX(1.0284);transform-origin:0 0;">6</div>
<div class="t" style="left:34.80px;top:769.83px;font-size:44.00px;color:#1e6e3e;transform:scaleX(0.9145);transform-origin:0 0;">7</div>
<div class="t" style="left:31.30px;top:833.83px;font-size:44.00px;color:#1e6e3e;transform:scaleX(1.0260);transform-origin:0 0;">8</div>
<div class="t" style="left:32.80px;top:898.83px;font-size:44.00px;color:#1e6e3e;transform:scaleX(1.0393);transform-origin:0 0;">9</div>
<div class="t" style="left:93.50px;top:380.13px;font-size:50.00px;font-weight:bold;color:#000000;transform:scaleX(0.9120);transform-origin:0 0;">Students</div>
<div class="t" style="left:407.50px;top:381.12px;font-size:50.00px;font-weight:bold;color:#000000;transform:scaleX(0.8761);transform-origin:0 0;">Scores</div>
<div class="t" style="left:91.20px;top:453.77px;font-size:36.00px;color:#000000;transform:scaleX(0.9982);transform-origin:0 0;">Favour</div>
<div class="t" style="left:91.20px;top:517.77px;font-size:36.00px;color:#000000;transform:scaleX(0.9888);transform-origin:0 0;">Chidera</div>
<div class="t" style="left:91.20px;top:581.77px;font-size:36.00px;color:#000000;transform:scaleX(1.0272);transform-origin:0 0;">Daniel</div>
<div class="t" style="left:92.20px;top:646.77px;font-size:36.00px;color:#000000;transform:scaleX(1.0160);transform-origin:0 0;">Christain</div>
<div class="t" style="left:92.20px;top:711.77px;font-size:36.00px;color:#000000;transform:scaleX(0.9732);transform-origin:0 0;">Amaka</div>
<div class="t" style="left:91.20px;top:774.77px;font-size:36.00px;color:#000000;transform:scaleX(0.9726);transform-origin:0 0;">Celina</div>
<div class="t" style="left:91.20px;top:838.27px;font-size:36.00px;color:#000000;transform:scaleX(1.0217);transform-origin:0 0;">Theophilus</div>
<div class="t" style="left:90.70px;top:901.77px;font-size:36.00px;color:#000000;transform:scaleX(1.0240);transform-origin:0 0;">Emmanuel</div>
<div class="t" style="left:406.20px;top:453.77px;font-size:36.00px;color:#000000;transform:scaleX(1.0709);transform-origin:0 0;">50</div>
<div class="t" style="left:406.20px;top:517.77px;font-size:36.00px;color:#000000;transform:scaleX(1.0709);transform-origin:0 0;">30</div>
<div class="t" style="left:406.20px;top:581.77px;font-size:36.00px;color:#006100;transform:scaleX(1.0709);transform-origin:0 0;">80</div>
<div class="t" style="left:406.20px;top:645.77px;font-size:36.00px;color:#000000;transform:scaleX(1.0709);transform-origin:0 0;">57</div>
<div class="t" style="left:406.20px;top:709.77px;font-size:36.00px;color:#006100;transform:scaleX(1.0709);transform-origin:0 0;">87</div>
<div class="t" style="left:405.20px;top:773.77px;font-size:36.00px;color:#000000;transform:scaleX(1.1007);transform-origin:0 0;">15</div>
<div class="t" style="left:406.20px;top:837.77px;font-size:36.00px;color:#000000;transform:scaleX(1.0709);transform-origin:0 0;">78</div>
<div class="t" style="left:404.20px;top:901.77px;font-size:36.00px;color:#006100;transform:scaleX(1.0842);transform-origin:0 0;">100</div>
<div class="t" style="left:131.05px;top:955.77px;font-size:19.00px;font-weight:bold;color:#1e6e3e;transform:scaleX(1.0492);transform-origin:0 0;">Sheet1</div>
<div class="t" style="left:13.23px;top:995.18px;font-size:15.50px;color:#555555;transform:scaleX(0.9773);transform-origin:0 0;">Ready</div>
<div class="t" style="left:110.22px;top:995.18px;font-size:15.50px;color:#444444;transform:scaleX(1.0012);transform-origin:0 0;">Accessibility: Good to go</div>
<div class="t" style="left:771.23px;top:994.18px;font-size:15.50px;color:#444444;transform:scaleX(1.0045);transform-origin:0 0;">Average: 62.125</div>
<div class="t" style="left:950.23px;top:994.18px;font-size:15.50px;color:#444444;transform:scaleX(1.0108);transform-origin:0 0;">Count: 8</div>
<div class="t" style="left:1030.23px;top:994.18px;font-size:15.50px;color:#444444;transform:scaleX(1.0065);transform-origin:0 0;">Sum: 497</div>
<div class="t" style="left:1516.22px;top:994.18px;font-size:15.50px;color:#444444;transform:scaleX(1.0448);transform-origin:0 0;">220%</div>
<div class="t" style="left:976.13px;top:434.94px;font-size:17.50px;color:#000000;transform:scaleX(1.0365);transform-origin:0 0;">Top 10 Items</div>
<div class="t" style="left:1283.12px;top:429.94px;font-size:21.00px;color:#222222;transform:scaleX(0.8396);transform-origin:0 0;">?</div>
<div class="t" style="left:974.20px;top:479.12px;font-size:16.00px;font-weight:bold;color:#000000;transform:scaleX(0.9945);transform-origin:0 0;">Format cells that rank in the TOP:</div>
<div class="t" style="left:976.20px;top:526.12px;font-size:14.50px;color:#222222;transform:scaleX(1.3085);transform-origin:0 0;">3</div>
<div class="t" style="left:1066.20px;top:526.12px;font-size:16.00px;color:#000000;transform:scaleX(1.1047);transform-origin:0 0;">with</div>
<div class="t" style="left:1115.20px;top:527.12px;font-size:16.00px;color:#000000;transform:scaleX(0.9707);transform-origin:0 0;">Green Fill with Dark Green Text</div>
<div class="t" style="left:1113.23px;top:553.18px;font-size:15.50px;color:#000000;transform:scaleX(1.0040);transform-origin:0 0;">Light Red Fill with Dark Red Text</div>
<div class="t" style="left:1113.23px;top:574.48px;font-size:15.50px;color:#000000;transform:scaleX(1.0270);transform-origin:0 0;">Yellow Fill with Dark Yellow Text</div>
<div class="t" style="left:1116.23px;top:595.28px;font-size:15.50px;color:#000000;transform:scaleX(0.9854);transform-origin:0 0;">Green Fill with Dark Green Text</div>
<div class="t" style="left:1113.23px;top:616.18px;font-size:15.50px;color:#000000;transform:scaleX(1.0111);transform-origin:0 0;">Light Red Fill</div>
<div class="t" style="left:1113.23px;top:637.58px;font-size:15.50px;color:#000000;transform:scaleX(0.9898);transform-origin:0 0;">Red Text</div>
<div class="t" style="left:1113.23px;top:658.68px;font-size:15.50px;color:#000000;transform:scaleX(1.0014);transform-origin:0 0;">Red Border</div>
<div class="t" style="left:1113.23px;top:679.48px;font-size:15.50px;color:#000000;transform:scaleX(0.9937);transform-origin:0 0;">Custom Format...</div>
<div class="t" style="left:1400.53px;top:603.73px;font-size:29.50px;font-weight:bold;color:#000000;transform:scaleX(1.0856);transform-origin:0 0;">Click</div>
<div class="t" style="left:1400.53px;top:643.53px;font-size:29.50px;font-weight:bold;color:#000000;transform:scaleX(1.1669);transform-origin:0 0;">Here</div>
<div class="t" style="left:794.35px;top:765.12px;font-size:33.00px;font-weight:bold;color:#000000;transform:scaleX(1.1035);transform-origin:0 0;">Green Fill With Dark</div>
<div class="t" style="left:869.35px;top:812.12px;font-size:33.00px;font-weight:bold;color:#000000;transform:scaleX(1.1447);transform-origin:0 0;">Green Text</div>
</body></html>
